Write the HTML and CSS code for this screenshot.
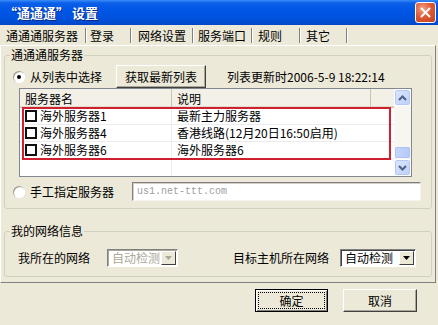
FILE: index.html
```html
<!DOCTYPE html>
<html lang="zh-CN">
<head>
  <meta charset="UTF-8">
  <meta name="viewport" content="width=device-width, initial-scale=1.0">
  <title>“通通通” 设置</title>
  <link rel="stylesheet" href="styles.css">
</head>
<body>
  <!-- Title bar -->
  <div class="titlebar">
    <span class="title">“通通通” 设置</span>
    <span class="close">
      <svg width="13" height="13" viewBox="0 0 13 13"><path d="M2.5 2.5L10.5 10.5M10.5 2.5L2.5 10.5" stroke="#fff" stroke-width="2" stroke-linecap="round"/></svg>
    </span>
  </div>

  <!-- Tabs -->
  <div class="tabs">
    <div class="tab tab-server">通通通服务器</div>
    <div class="tab tab-login">登录</div>
    <div class="tab tab-net">网络设置</div>
    <div class="tab tab-port">服务端口</div>
    <div class="tab tab-rule">规则</div>
    <div class="tab tab-other">其它</div>
  </div>

  <div class="panel">
    <!-- Server group -->
    <fieldset class="group group-server">
      <legend>通通通服务器</legend>
      <div class="choice">
        <label class="radio radio-list"><span class="radio-dot checked"></span>从列表中选择</label>
        <span class="btn btn-fetch">获取最新列表</span>
        <span class="updated">列表更新时2006-5-9 18:22:14</span>
      </div>

      <div class="list">
        <div class="list-main">
          <div class="list-head">
            <span class="col col-name">服务器名</span>
            <span class="col col-desc">说明</span>
          </div>
          <div class="row">
            <span class="col col-name"><span class="check"></span>海外服务器1</span>
            <span class="col col-desc">最新主力服务器</span>
          </div>
          <div class="row">
            <span class="col col-name"><span class="check"></span>海外服务器4</span>
            <span class="col col-desc">香港线路(12月20日16:50启用)</span>
          </div>
          <div class="row">
            <span class="col col-name"><span class="check"></span>海外服务器6</span>
            <span class="col col-desc">海外服务器6</span>
          </div>
          <div class="row row-empty">
            <span class="col col-name"></span>
          </div>
          <div class="highlight"></div>
        </div>
        <div class="scrollbar">
          <span class="sb-btn">
            <svg width="9" height="6" viewBox="0 0 9 6"><path d="M1 5L4.5 1.5L8 5" fill="none" stroke="#4d6185" stroke-width="2"/></svg>
          </span>
          <span class="sb-track"><span class="sb-thumb"></span></span>
          <span class="sb-btn">
            <svg width="9" height="6" viewBox="0 0 9 6"><path d="M1 1L4.5 4.5L8 1" fill="none" stroke="#4d6185" stroke-width="2"/></svg>
          </span>
        </div>
      </div>

      <div class="choice choice-manual">
        <label class="radio radio-manual"><span class="radio-dot"></span>手工指定服务器</label>
        <span class="input">us1.net-ttt.com</span>
      </div>
    </fieldset>

    <!-- Network group -->
    <fieldset class="group group-net">
      <legend>我的网络信息</legend>
      <div class="net-row">
        <span class="net-label">我所在的网络</span>
        <span class="combo combo-disabled">
          <span class="combo-text">自动检测</span>
          <span class="combo-btn"><svg width="7" height="4" viewBox="0 0 7 4"><path d="M0 0H7L3.5 4Z" fill="#aca899"/></svg></span>
        </span>
        <span class="net-label net-label-target">目标主机所在网络</span>
        <span class="combo combo-target">
          <span class="combo-text">自动检测</span>
          <span class="combo-btn"><svg width="7" height="4" viewBox="0 0 7 4"><path d="M0 0H7L3.5 4Z" fill="#000"/></svg></span>
        </span>
      </div>
    </fieldset>
  </div>

  <!-- Dialog buttons -->
  <div class="footer">
    <span class="btn btn-default"><span class="focus">确定</span></span>
    <span class="btn btn-cancel">取消</span>
  </div>
</body>
</html>
```

FILE: styles.css
```css
body {
  margin: 0;
  width: 438px;
  height: 325px;
  overflow: hidden;
  background-color: #ece9d8;
  font-family: "Noto Sans CJK SC", sans-serif;
  font-size: 12px;
  line-height: 12px;
  color: #000;
}

/* title bar */
.titlebar {
  height: 25px;
  box-sizing: border-box;
  display: flex;
  align-items: center;
  justify-content: space-between;
  padding: 0 2px 0 4px;
  background: linear-gradient(to bottom, #3b8cf7 0, #0b5fe8 3px, #0056e6 10px, #0052de 18px, #0047c8 25px);
}
.title {
  color: #fff;
  font-weight: bold;
  font-size: 13px;
  line-height: 14px;
  text-shadow: 1px 1px #0a2a8a;
}
.close {
  width: 21px;
  height: 21px;
  box-sizing: border-box;
  border: 1px solid #fff;
  border-radius: 3px;
  background: radial-gradient(circle at 35% 30%, #f0a48a 0, #df5a37 45%, #c2401d 100%);
  display: flex;
  align-items: center;
  justify-content: center;
}

/* tabs */
.tabs {
  display: flex;
  height: 20px;
}
.tab {
  box-sizing: border-box;
  height: 15px;
  margin-top: 3px;
  padding-left: 5px;
  line-height: 15px;
  border-right: 1px solid #808080;
  box-shadow: 1px 0 0 #fff;
  white-space: nowrap;
}
.tab-server { width: 86px; padding-left: 6px; }
.tab-login { width: 45px; padding-left: 4px; }
.tab-net { width: 62px; padding-left: 7px; }
.tab-port { width: 59px; }
.tab-rule { width: 48px; padding-left: 6px; }
.tab-other { width: 47px; padding-left: 6px; }

/* tab page */
.panel {
  width: 436px;
  height: 238px;
  box-sizing: border-box;
  border: 1px solid;
  border-color: #fff #808080 #808080 #fff;
  padding: 3px 3px 0 3px;
}

.group {
  margin: 0;
  min-width: 0;
  border: 1px solid #d0d0bf;
  border-radius: 3px;
}
.group legend {
  padding: 0 1px;
  margin-left: -3px;
  line-height: 12px;
}
.group-server {
  padding: 4px 7px 7px 8px;
}
.group-net {
  margin-top: 16px;
  padding: 12px 13px 9px 13px;
}
.group-net legend {
  margin-left: -8px;
}

.choice {
  display: flex;
  align-items: center;
  height: 23px;
}
.choice-manual {
  height: 19px;
  margin-top: 5px;
}
.radio {
  display: flex;
  align-items: center;
  gap: 5px;
}
.radio-list { width: 103px; }
.radio-manual { width: 119px; }
.radio-dot {
  width: 12px;
  height: 12px;
  box-sizing: border-box;
  border-radius: 50%;
  background: radial-gradient(circle at 60% 60%, #fff 0, #fff 45%, #e6e3d6 100%);
  box-shadow: inset 1px 1px 0 #a09d90, inset -1px -1px 0 #fff;
  display: flex;
  align-items: center;
  justify-content: center;
}
.radio-dot.checked::after {
  content: "";
  width: 4px;
  height: 4px;
  border-radius: 50%;
  background-color: #000;
}
.updated {
  margin-left: 21px;
  white-space: nowrap;
}

/* buttons */
.btn {
  box-sizing: border-box;
  display: flex;
  align-items: center;
  justify-content: center;
  height: 23px;
  background-color: #ece9d8;
  border: 1px solid;
  border-color: #fff #404040 #404040 #fff;
  box-shadow: inset -1px -1px 0 #aca899;
}
.btn-fetch { width: 90px; }

/* server list */
.list {
  display: flex;
  width: 393px;
  height: 89px;
  margin-left: 6px;
  box-sizing: border-box;
  border: 1px solid #828790;
  background-color: #fff;
}
.list-main {
  position: relative;
  flex: 1;
  display: flex;
  flex-direction: column;
}
.list-head {
  display: flex;
  height: 19px;
  background-color: #f3f1e7;
  box-shadow: inset 0 -1px 0 #cbc7b8, inset 0 -2px 0 #dedbcc;
}
.list-head .col {
  height: 19px;
  line-height: 19px;
  border-right: 1px solid #c7c5b2;
}
.col {
  box-sizing: border-box;
  display: flex;
  align-items: center;
  padding-left: 5px;
  white-space: nowrap;
}
.col-name { width: 152px; border-right: 1px solid #ececec; }
.col-desc { width: 199px; }
.row {
  display: flex;
  height: 17px;
  border-bottom: 1px solid #ececec;
  box-sizing: border-box;
}
.row .col { height: 16px; }
.row-empty {
  flex: 1;
  border-bottom: none;
}
.row-empty .col { height: auto; }
.check {
  width: 12px;
  height: 12px;
  box-sizing: border-box;
  border: 2px solid #111;
  margin-right: 3px;
  background-color: #fff;
}
.highlight {
  position: absolute;
  left: 2px;
  top: 18px;
  width: 369px;
  height: 53px;
  box-sizing: border-box;
  border: 2px solid #d02030;
}

.scrollbar {
  width: 17px;
  display: flex;
  flex-direction: column;
  background-color: #f7f6f1;
}
.sb-btn {
  height: 17px;
  box-sizing: border-box;
  border: 1px solid #fff;
  border-radius: 3px;
  background: linear-gradient(to bottom right, #dde7fd, #bccefa);
  box-shadow: inset 0 0 0 1px #b4c8f6;
  display: flex;
  align-items: center;
  justify-content: center;
}
.sb-track {
  flex: 1;
  display: flex;
  flex-direction: column;
  justify-content: flex-end;
  padding-bottom: 1px;
}
.sb-thumb {
  height: 11px;
  margin: 0 1px;
  border-radius: 2px;
  background: linear-gradient(to right, #c6d6fc, #b4c8f8);
  box-shadow: inset 0 0 0 1px #b0c4f4;
}

.input {
  box-sizing: border-box;
  width: 289px;
  height: 19px;
  padding-left: 4px;
  display: flex;
  align-items: center;
  background-color: #fff;
  border: 1px solid;
  border-color: #808080 #f4f3ee #f4f3ee #808080;
  box-shadow: inset 1px 1px 0 #d4d0c8;
  font-family: "Liberation Mono", monospace;
  font-size: 10px;
  color: #a0a0a0;
}

/* network info */
.net-row {
  display: flex;
  align-items: center;
  height: 18px;
}
.net-label { width: 89px; white-space: nowrap; }
.net-label-target { width: 97px; margin-left: 55px; }
.combo {
  box-sizing: border-box;
  display: flex;
  align-items: center;
  justify-content: space-between;
  height: 18px;
  padding: 1px;
  background-color: #fff;
  border: 1px solid;
  border-color: #808080 #fff #fff #808080;
  box-shadow: inset 1px 1px 0 #404040;
}
.combo-disabled {
  width: 71px;
  color: #aca899;
  box-shadow: inset 1px 1px 0 #aca899;
}
.combo-target {
  width: 76px;
  margin-left: 10px;
}
.combo-text {
  padding-left: 3px;
  white-space: nowrap;
}
.combo-btn {
  width: 15px;
  height: 14px;
  box-sizing: border-box;
  background-color: #ece9d8;
  border: 1px solid;
  border-color: #fff #404040 #404040 #fff;
  display: flex;
  align-items: center;
  justify-content: center;
}

/* footer */
.footer {
  display: flex;
  justify-content: flex-end;
  gap: 15px;
  padding: 6px 21px 0 0;
}
.btn-default {
  width: 73px;
  border-color: #000;
  box-shadow: inset 1px 1px 0 #fff, inset -1px -1px 0 #808080;
}
.btn-cancel { width: 74px; }
.focus {
  display: flex;
  align-items: center;
  justify-content: center;
  width: 65px;
  height: 15px;
  outline: 1px dotted #000;
}
```
